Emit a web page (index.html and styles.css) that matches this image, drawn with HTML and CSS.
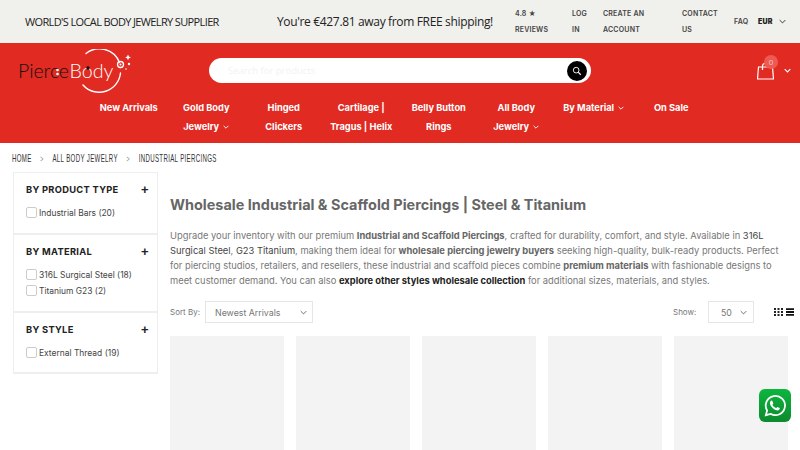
FILE: index.html
```html
<!DOCTYPE html>
<html lang="en">
<head>
<meta charset="utf-8">
<title>Wholesale Industrial &amp; Scaffold Piercings</title>
<link rel="stylesheet" href="styles.css">
</head>
<body>
<div class="topbar">
  <div class="tagline">WORLD'S LOCAL BODY JEWELRY SUPPLIER</div>
  <div class="shipping">You're €427.81 away from FREE shipping!</div>
  <div class="toplinks">
    <a class="tl tl-reviews">4.8 ★<br>REVIEWS</a>
    <a class="tl tl-log">LOG<br>IN</a>
    <a class="tl tl-create">CREATE AN<br>ACCOUNT</a>
    <a class="tl tl-contact">CONTACT<br>US</a>
    <a class="tl tl-faq">FAQ</a>
    <a class="tl tl-eur"><b>EUR</b>
      <svg class="chev-s" viewBox="0 0 10 6"><path d="M1 1l4 4 4-4" fill="none" stroke="#333" stroke-width="1.4"/></svg>
    </a>
  </div>
</div>

<header class="header">
  <div class="headrow">
    <svg class="logo" viewBox="0 0 114 46" aria-label="PierceBody">
      <path d="M68 4.500A21.500 21.500 0 0 1 101.500 13.500M102.500 24A21.500 21.500 0 0 1 65 36" fill="none" stroke="#fff" stroke-width="1.400" stroke-linecap="round"/>
      <circle cx="102.500" cy="15.500" r="3" fill="none" stroke="#fff" stroke-width="1.300"/>
      <circle cx="102.500" cy="15.500" r="1" fill="#fff"/>
      <circle cx="111" cy="15" r="1.200" fill="#fff"/>
      <path d="M110 5.500l.9 2 2 .9-2 .9-.9 2-.9-2-2-.9 2-.9z" fill="#fff"/>
      <circle cx="108" cy="20" r=".8" fill="#fff"/>
      <text class="logo-a" x="0" y="28.500" textLength="51" lengthAdjust="spacingAndGlyphs">Pierce</text>
      <text class="logo-b" x="51.500" y="28.500" textLength="44" lengthAdjust="spacingAndGlyphs">Body</text>
      <circle cx="39.500" cy="21" r="1.300" fill="#fff"/>
      <circle cx="39.500" cy="25" r="1.300" fill="#fff"/>
      <circle cx="70" cy="19" r="1.700" fill="#111"/>
    </svg>
    <form class="search">
      <span class="placeholder">Search for products</span>
      <span class="searchbtn">
        <svg viewBox="0 0 12 12" class="searchicon"><circle cx="5" cy="5" r="3.400" fill="none" stroke="#fff" stroke-width="1.100"/><path d="M7.500 7.500l3 3" stroke="#fff" stroke-width="1.300"/></svg>
      </span>
    </form>
    <div class="cart">
      <svg class="bag" viewBox="0 0 17 17"><path d="M1.500 4h14l1 12H.5zM5.500 7V3a2.500 2.500 0 0 1 5 0" fill="none" stroke="#fff" stroke-width="1.200"/></svg>
      <span class="badge">0</span>
      <svg class="chev-c" viewBox="0 0 10 6"><path d="M1 1l4 4 4-4" fill="none" stroke="#fff" stroke-width="1.600"/></svg>
    </div>
  </div>
  <nav class="nav">
    <a>New Arrivals</a>
    <a>Gold Body<br>Jewelry <svg class="chev-n" viewBox="0 0 10 6"><path d="M1 1l4 4 4-4" fill="none" stroke="#fff" stroke-width="1.500"/></svg></a>
    <a>Hinged<br>Clickers</a>
    <a>Cartilage |<br>Tragus | Helix</a>
    <a>Belly Button<br>Rings</a>
    <a>All Body<br>Jewelry <svg class="chev-n" viewBox="0 0 10 6"><path d="M1 1l4 4 4-4" fill="none" stroke="#fff" stroke-width="1.500"/></svg></a>
    <a>By Material <svg class="chev-n" viewBox="0 0 10 6"><path d="M1 1l4 4 4-4" fill="none" stroke="#fff" stroke-width="1.500"/></svg></a>
    <a>On Sale</a>
  </nav>
</header>

<div class="crumbs">
  <div class="crumbs-in"><span>HOME</span><i>&gt;</i><span>ALL BODY JEWELRY</span><i>&gt;</i><span>INDUSTRIAL PIERCINGS</span></div>
</div>

<div class="page">
  <aside class="side">
    <section class="fs fs1">
      <h3>BY PRODUCT TYPE<em>+</em></h3>
      <label><span class="cb"></span>Industrial Bars (20)</label>
    </section>
    <section class="fs fs2">
      <h3>BY MATERIAL<em>+</em></h3>
      <label><span class="cb"></span>316L Surgical Steel (18)</label>
      <label><span class="cb"></span>Titanium G23 (2)</label>
    </section>
    <section class="fs fs3">
      <h3>BY STYLE<em>+</em></h3>
      <label><span class="cb"></span>External Thread (19)</label>
    </section>
  </aside>
  <main class="main">
    <h1>Wholesale Industrial &amp; Scaffold Piercings | Steel &amp; Titanium</h1>
    <p class="intro">Upgrade your inventory with our premium <b>Industrial and Scaffold Piercings</b>, crafted for durability, comfort, and style. Available in <span class="dk">316L<br>Surgical Steel</span>, <span class="dk">G23 Titanium</span>, making them ideal for <b>wholesale piercing jewelry buyers</b> seeking high-quality, bulk-ready products. Perfect<br>for piercing studios, retailers, and resellers, these industrial and scaffold pieces combine <b>premium materials</b> with fashionable designs to<br>meet customer demand. You can also <b class="dkb">explore other styles wholesale collection</b> for additional sizes, materials, and styles.</p>
    <div class="toolbar">
      <span class="lab">Sort By:</span>
      <div class="sel sel-sort"><span>Newest Arrivals</span><svg class="chev-t" viewBox="0 0 10 6"><path d="M1 1l4 4 4-4" fill="none" stroke="#555" stroke-width="1.200"/></svg></div>
      <span class="lab lab-show">Show:</span>
      <div class="sel sel-show"><span>50</span><svg class="chev-t" viewBox="0 0 10 6"><path d="M1 1l4 4 4-4" fill="none" stroke="#555" stroke-width="1.200"/></svg></div>
      <svg class="grid-i" viewBox="0 0 9 8"><path d="M0 0h2v2H0zM3.500 0h2v2h-2zM7 0h2v2H7zM0 3h2v2H0zM3.500 3h2v2h-2zM7 3h2v2H7zM0 6h2v2H0zM3.500 6h2v2h-2zM7 6h2v2H7z" fill="#222"/></svg>
      <svg class="list-i" viewBox="0 0 9 8"><path d="M0 0h9v2H0zM0 3h9v2H0zM0 6h9v2H0z" fill="#111"/></svg>
    </div>
    <div class="products">
      <div class="card"></div><div class="card"></div><div class="card"></div><div class="card"></div><div class="card"></div>
    </div>
  </main>
</div>

<a class="whatsapp">
  <svg viewBox="0 0 32 32" class="wa"><path d="M5.500 26.500l1.500-5.400A11 11 0 1 1 11 25z" fill="none" stroke="#fff" stroke-width="2"/><path d="M12.300 9.800c-.5 0-1.100.3-1.500.9-.8 1.100-.8 2.700.1 4.400 1.300 2.500 3.300 4.400 5.900 5.500 1.800.7 3.300.5 4.200-.6.400-.5.500-1.200.4-1.700l-2.700-1.300-1.300 1.400c-2-.7-3.400-2-4.300-3.900l1-1.300-1.100-2.800z" fill="#fff"/></svg>
</a>
</body>
</html>
```
FILE: styles.css
```css
* { box-sizing: border-box; }
html, body { margin: 0; padding: 0; height: 450px; overflow: hidden; background: #fff; }
body { font-family: Inter, "Open Sans", "Liberation Sans", sans-serif; color: #777; position: relative; }
a { color: inherit; text-decoration: none; }

.topbar { height: 43px; background: #f0f0ec; display: flex; align-items: center; padding-left: 25px; }
.tagline { font: 500 11px/16px "Open Sans", sans-serif; letter-spacing: -.63px; color: #222; width: 252px; white-space: nowrap; }
.shipping { font: 400 12px/18px "Open Sans", sans-serif; letter-spacing: -.34px; color: #222; width: 238px; white-space: nowrap; }
.toplinks { display: flex; align-items: center; font: 600 7px/16px Inter, sans-serif; color: #444; letter-spacing: .2px; }
.tl { display: block; white-space: nowrap; }
.tl-reviews { width: 57px; }
.tl-log { width: 31px; }
.tl-create { width: 79px; }
.tl-contact { width: 52px; }
.tl-faq { width: 24px; }
.tl-eur { display: flex; align-items: center; gap: 6px; color: #222; }
.chev-s { width: 7px; height: 5px; }

.header { height: 100px; background: #e12a22; }
.headrow { height: 54px; display: flex; position: relative; }
.logo { width: 114px; height: 46px; margin: 6px 0 0 18px; flex: none; }
.logo-a { font: 300 20px Lato, sans-serif; fill: #111; }
.logo-b { font: 300 20px Lato, sans-serif; fill: #fff; }
.search { width: 382px; height: 25px; margin: 15px 0 0 77px; background: #fff; border-radius: 13px; display: flex; align-items: center; justify-content: space-between; padding: 0 4px 0 19px; flex: none; }
.placeholder { font: 400 9.500px "Open Sans", sans-serif; color: #f2f2f2; }
.searchbtn { width: 20px; height: 20px; border-radius: 50%; background: #000; display: flex; align-items: center; justify-content: center; }
.searchicon { width: 10px; height: 10px; }
.cart { position: absolute; left: 756px; top: 12px; width: 40px; height: 30px; }
.bag { position: absolute; left: 1px; top: 8px; width: 17px; height: 17px; }
.badge { position: absolute; left: 8px; top: 0; width: 14px; height: 14px; border-radius: 50%; background: #ed5a52; color: #f5c4c0; font: 400 8px/14px "Open Sans", sans-serif; text-align: center; }
.chev-c { position: absolute; left: 28px; top: 13px; width: 7px; height: 5px; }

.nav { display: grid; grid-template-columns: repeat(8, 77.500px); justify-content: center; padding-top: .5px; }
.nav a { font: 700 9.250px/19px Inter, sans-serif; color: #fff; text-align: center; white-space: nowrap; }
.chev-n { width: 6px; height: 4px; margin-left: 2px; vertical-align: 1px; }

.crumbs { height: 29px; display: flex; align-items: center; padding-left: 12px; }
.crumbs-in { font: 400 10.500px "Liberation Sans", sans-serif; color: #333; letter-spacing: .6px; white-space: nowrap; transform: scaleX(.58); transform-origin: left center; }
.crumbs-in i { font-style: normal; color: #888; margin: 0 15px; font-size: 9px; }

.page { display: flex; align-items: flex-start; padding-left: 13px; }
.side { width: 145px; border: 1px solid #eee; border-bottom-width: 2px; flex: none; }
.fs { padding: 9px 8px 0 12px; border-bottom: 2px solid #eee; }
.fs:last-child { border-bottom: 0; }
.fs1 { height: 62px; }
.fs2 { height: 78px; }
.fs3 { height: 59px; }
.side h3 { margin: 0 0 6.500px; font: 700 9.300px/16px Inter, sans-serif; color: #222; letter-spacing: .3px; display: flex; justify-content: space-between; }
.side em { font: 700 13px/16px "Liberation Sans", sans-serif; color: #222; }
.side label { display: flex; align-items: center; height: 16px; margin-left: -.5px; font: 400 8.450px/16px Inter, sans-serif; color: #444; white-space: nowrap; }
.cb { width: 11px; height: 11px; border: 1px solid #ccc; border-radius: 2px; margin-right: 2.500px; flex: none; }

.main { margin-left: 12px; width: 630px; flex: none; padding-top: 23px; }
.main h1 { margin: 0 0 13px; font: 700 14.450px/20px Inter, sans-serif; color: #666; white-space: nowrap; }
.intro { margin: 0; font: 400 9.350px/15px Inter, sans-serif; color: #777; white-space: nowrap; }
.intro b { font-weight: 700; color: #666; }
.intro .dkb { color: #222; }
.dk { color: #444; }
.toolbar { margin-top: 13px; height: 22px; display: flex; align-items: center; }
.lab { font: 400 8px Inter, sans-serif; color: #777; width: 35px; flex: none; white-space: nowrap; }
.lab-show { margin-left: 360px; }
.sel { height: 22px; flex: none; border: 1px solid #e6e6e6; display: flex; align-items: center; justify-content: space-between; font: 400 8.800px Inter, sans-serif; color: #777; }
.sel-sort { width: 108px; padding: 0 5px 0 9px; }
.sel-show { width: 46px; padding: 0 6px 0 12px; }
.chev-t { width: 7px; height: 5px; }
.grid-i { width: 9px; height: 8px; flex: none; margin-left: 19.500px; }
.list-i { width: 8.500px; height: 8px; flex: none; margin-left: 3px; }
.products { margin-top: 13px; display: flex; gap: 12px; }
.card { width: 114px; height: 130px; flex: none; background: #f3f3f3; }

.whatsapp { position: absolute; left: 759px; top: 389px; width: 32px; height: 33px; border-radius: 6px; background: linear-gradient(#0cb63f, #0c8a2e); display: flex; align-items: center; justify-content: center; }
.wa { width: 28px; height: 28px; }
```
